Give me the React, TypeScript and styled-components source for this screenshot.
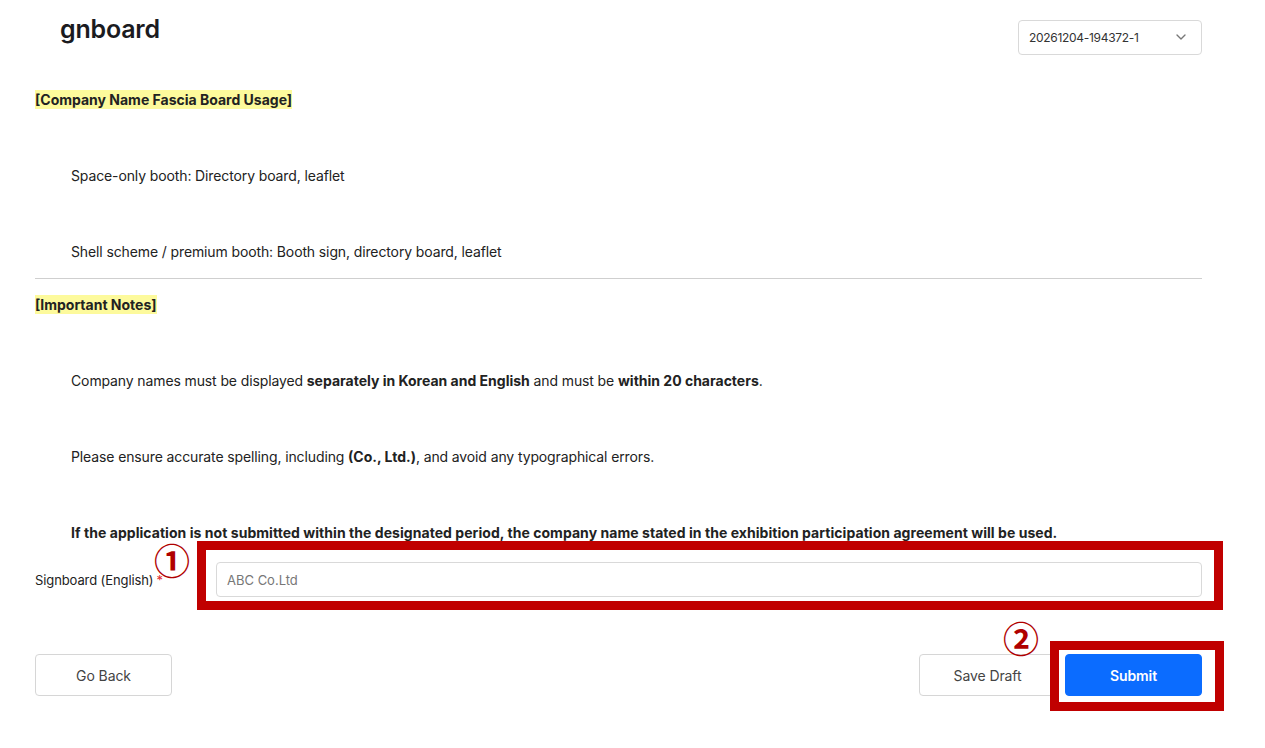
import styled, { createGlobalStyle } from "styled-components";
import { ChevronDown } from "lucide-react";

const GlobalStyle = createGlobalStyle`
  html, body {
    margin: 0;
    padding: 0;
    background: #fff;
  }
  body {
    font-family: Inter, "Noto Sans", "Noto Sans CJK KR", sans-serif;
    color: #222;
  }
  * { box-sizing: border-box; }
`

const PageBase = styled.div`
  position: relative;
  width: 1265px;
  min-height: 748px;
  padding: 0 63px 40px 35px;
`

const HeaderBase = styled.div`
  display: flex;
  align-items: center;
  justify-content: space-between;
  height: 74px;
`

const TitleBase = styled.h1`
  margin: 0 0 0 25px;
  font-size: 25px;
  font-weight: 600;
  color: #1b1b1f;
  letter-spacing: -0.2px;
  line-height: 1;
  align-self: flex-start;
  padding-top: 17px;
`

const SelectBase = styled.div`
  display: flex;
  align-items: center;
  justify-content: space-between;
  width: 184px;
  height: 35px;
  margin-top: 0;
  padding: 0 12px 0 10px;
  border: 1px solid #d9d9d9;
  border-radius: 4px;
  font-size: 12px;
  letter-spacing: -0.3px;
  color: #333;
`

const SectionTitle = styled.div`
  margin-top: 16px;
  line-height: 20px;
  font-size: 14px;
  font-weight: 700;
  color: #222;
  span {
    background: #fdfa9c;
    padding: 1px 0;
  }
`

const NoteLine = styled.p<{ strong?: boolean }>`
  margin: 56px 0 0 36px;
  line-height: 20px;
  font-size: 14px;
  letter-spacing: ${p => (p.strong ? "0.05px" : "-0.12px")};
  font-weight: ${p => (p.strong ? 700 : 400)};
  color: #222;
  b { font-weight: 700; letter-spacing: 0; }
`

const Divider = styled.hr`
  margin: 16px 0 0;
  border: 0;
  border-top: 1px solid #cfcfcf;
`

const FieldRow = styled.div`
  display: flex;
  align-items: center;
  margin-top: 19px;
`

const FieldLabel = styled.label`
  width: 181px;
  font-size: 13px;
  letter-spacing: -0.1px;
  color: #222;
  i {
    font-style: normal;
    color: #e0282e;
    margin-left: 3px;
  }
`

const TextInput = styled.input`
  flex: 1;
  height: 35px;
  padding: 0 10px;
  border: 1px solid #d9d9d9;
  border-radius: 4px;
  font-family: inherit;
  font-size: 13px;
  color: #222;
  &::placeholder { color: #777; }
`

const ActionBar = styled.div`
  display: flex;
  justify-content: space-between;
  margin-top: 57px;
`

const ActionGroup = styled.div`
  display: flex;
  gap: 9px;
`

const ActionButton = styled.button<{ primary?: boolean }>`
  width: 137px;
  height: 42px;
  border-radius: 4px;
  font-family: inherit;
  font-size: 14px;
  letter-spacing: -0.1px;
  cursor: pointer;
  border: 1px solid ${p => (p.primary ? "#0b6cff" : "#d6d6d6")};
  background: ${p => (p.primary ? "#0b6cff" : "#fff")};
  color: ${p => (p.primary ? "#fff" : "#444")};
  font-weight: ${p => (p.primary ? 600 : 400)};
`

// annotation overlays drawn over the form
const MarkBox = styled.div<{ x: number; y: number; w: number; h: number }>`
  position: absolute;
  left: ${p => p.x}px;
  top: ${p => p.y}px;
  width: ${p => p.w}px;
  height: ${p => p.h}px;
  border: 9px solid #c00000;
  pointer-events: none;
`

const MarkNum = styled.div<{ x: number; y: number }>`
  position: absolute;
  left: ${p => p.x}px;
  top: ${p => p.y}px;
  width: 38px;
  height: 38px;
  display: flex;
  align-items: center;
  justify-content: center;
  font-family: "Noto Sans CJK KR", "Noto Sans", sans-serif;
  font-size: 36px;
  font-weight: 700;
  line-height: 1;
  color: #b00000;
`

const App = () => {
  return <>
    <GlobalStyle />
    <PageBase>
      <HeaderBase>
        <TitleBase>gnboard</TitleBase>
        <SelectBase>
          <span>20261204-194372-1</span>
          <ChevronDown size={16} color="#777" strokeWidth={2} />
        </SelectBase>
      </HeaderBase>

      <SectionTitle><span>[Company Name Fascia Board Usage]</span></SectionTitle>
      <NoteLine>Space-only booth: Directory board, leaflet</NoteLine>
      <NoteLine>Shell scheme / premium booth: Booth sign, directory board, leaflet</NoteLine>
      <Divider />

      <SectionTitle><span>[Important Notes]</span></SectionTitle>
      <NoteLine>Company names must be displayed <b>separately in Korean and English</b> and must be <b>within 20 characters</b>.</NoteLine>
      <NoteLine>Please ensure accurate spelling, including <b>(Co., Ltd.)</b>, and avoid any typographical errors.</NoteLine>
      <NoteLine strong>If the application is not submitted within the designated period, the company name stated in the exhibition participation agreement will be used.</NoteLine>

      <FieldRow>
        <FieldLabel>Signboard (English)<i>*</i></FieldLabel>
        <TextInput placeholder="ABC Co.Ltd" />
      </FieldRow>

      <ActionBar>
        <ActionButton>Go Back</ActionButton>
        <ActionGroup>
          <ActionButton>Save Draft</ActionButton>
          <ActionButton primary>Submit</ActionButton>
        </ActionGroup>
      </ActionBar>

      <MarkBox x={197} y={541} w={1026} h={69} />
      <MarkNum x={153} y={540}>①</MarkNum>
      <MarkBox x={1050} y={641} w={174} h={70} />
      <MarkNum x={1002} y={618}>②</MarkNum>
    </PageBase>
  </>
}

export default App;
